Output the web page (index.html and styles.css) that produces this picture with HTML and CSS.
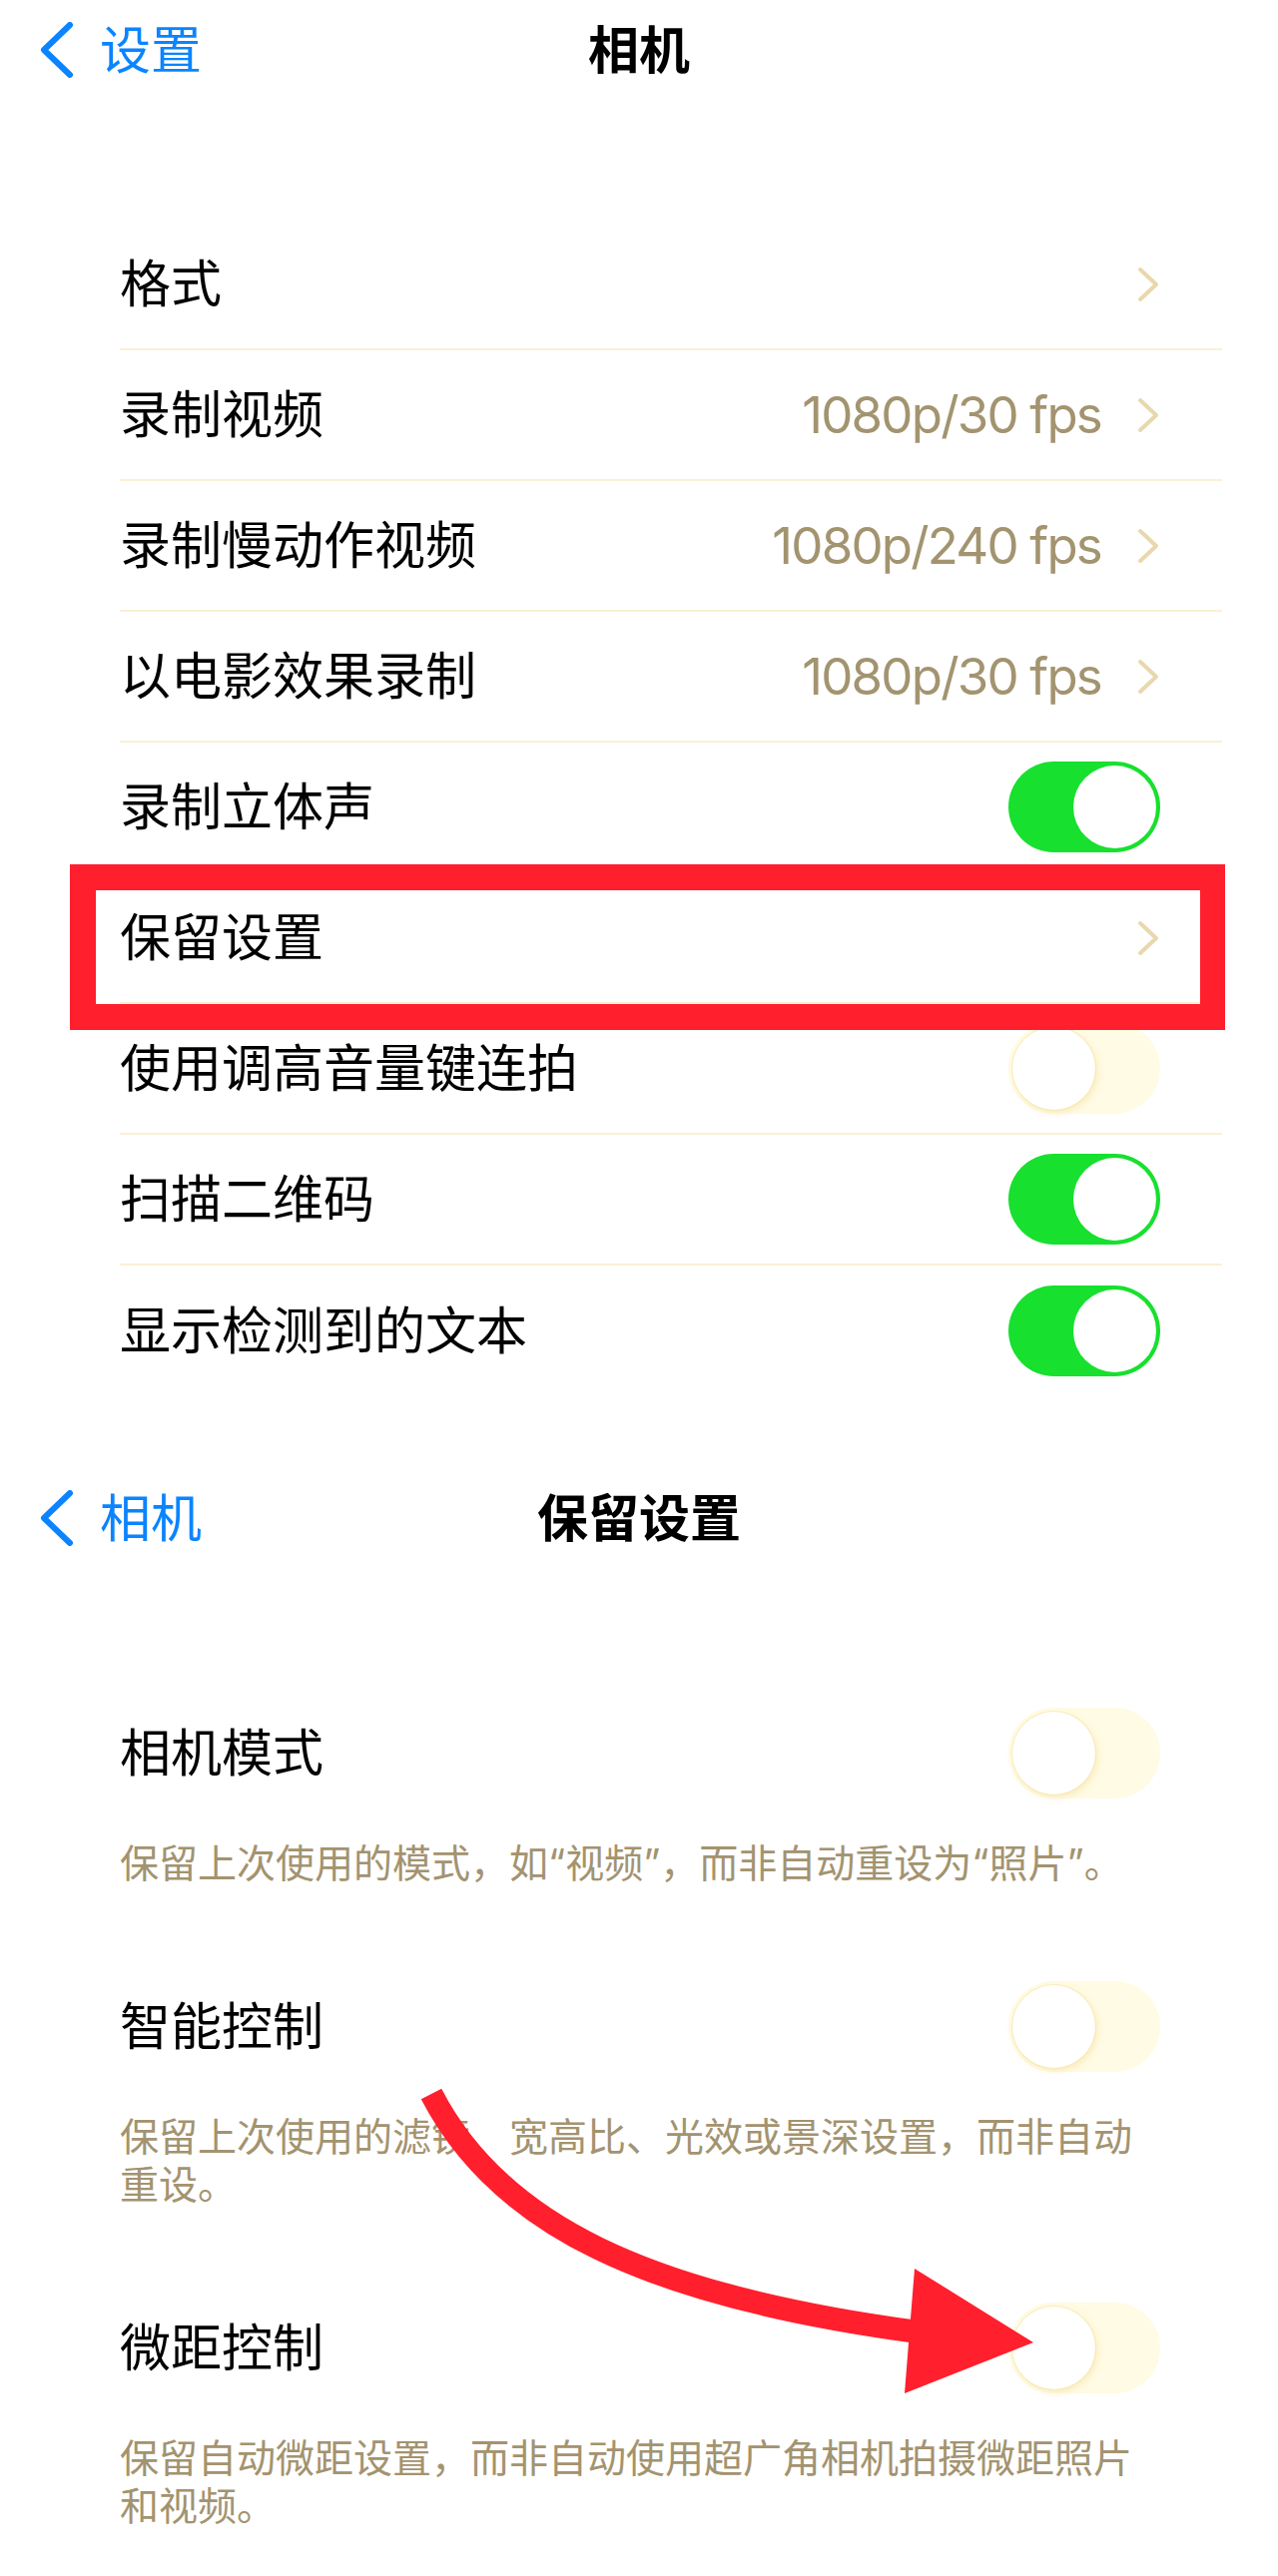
FILE: index.html
```html
<!DOCTYPE html>
<html>
<head>
<meta charset="utf-8">
<title>相机 · 保留设置</title>
<link rel="stylesheet" href="styles.css">
</head>
<body>
<div class="page">
  <section class="screen">
    <header class="nav">
      <a class="back">
        <svg class="back-chevron" viewBox="0 0 34 56"><path d="M30 3 L4 28 L30 53" /></svg>
        <span>设置</span>
      </a>
      <h1 class="nav-title">相机</h1>
      <span></span>
    </header>
    <ul class="list">
      <li class="row"><div class="row-inner"><span class="label">格式</span><span class="accessory"><svg class="chevron" viewBox="0 0 24 36"><path d="M4 3 L20 18 L4 33" /></svg></span></div></li>
      <li class="row"><div class="row-inner"><span class="label">录制视频</span><span class="accessory"><span class="value">1080p/30 fps</span><svg class="chevron" viewBox="0 0 24 36"><path d="M4 3 L20 18 L4 33" /></svg></span></div></li>
      <li class="row"><div class="row-inner"><span class="label">录制慢动作视频</span><span class="accessory"><span class="value">1080p/240 fps</span><svg class="chevron" viewBox="0 0 24 36"><path d="M4 3 L20 18 L4 33" /></svg></span></div></li>
      <li class="row"><div class="row-inner"><span class="label">以电影效果录制</span><span class="accessory"><span class="value">1080p/30 fps</span><svg class="chevron" viewBox="0 0 24 36"><path d="M4 3 L20 18 L4 33" /></svg></span></div></li>
      <li class="row"><div class="row-inner"><span class="label">录制立体声</span><span class="toggle on"><span class="knob"></span></span></div></li>
      <li class="row"><div class="row-inner"><span class="label">保留设置</span><span class="accessory"><svg class="chevron" viewBox="0 0 24 36"><path d="M4 3 L20 18 L4 33" /></svg></span></div></li>
      <li class="row"><div class="row-inner"><span class="label">使用调高音量键连拍</span><span class="toggle off"><span class="knob"></span></span></div></li>
      <li class="row"><div class="row-inner"><span class="label">扫描二维码</span><span class="toggle on"><span class="knob"></span></span></div></li>
      <li class="row"><div class="row-inner"><span class="label">显示检测到的文本</span><span class="toggle on"><span class="knob"></span></span></div></li>
    </ul>
  </section>

  <section class="screen screen-second">
    <header class="nav">
      <a class="back">
        <svg class="back-chevron" viewBox="0 0 34 56"><path d="M30 3 L4 28 L30 53" /></svg>
        <span>相机</span>
      </a>
      <h1 class="nav-title">保留设置</h1>
      <span></span>
    </header>
    <div class="group">
      <div class="row"><div class="row-inner"><span class="label">相机模式</span><span class="toggle off"><span class="knob"></span></span></div></div>
      <p class="footer">保留上次使用的模式，如“视频”，而非自动重设为“照片”。</p>
    </div>
    <div class="group">
      <div class="row"><div class="row-inner"><span class="label">智能控制</span><span class="toggle off"><span class="knob"></span></span></div></div>
      <p class="footer">保留上次使用的滤镜、宽高比、光效或景深设置，而非自动重设。</p>
    </div>
    <div class="group">
      <div class="row"><div class="row-inner"><span class="label">微距控制</span><span class="toggle off"><span class="knob"></span></span></div></div>
      <p class="footer">保留自动微距设置，而非自动使用超广角相机拍摄微距照片和视频。</p>
    </div>
  </section>

  <div class="highlight-box"></div>
  <svg class="annotation-arrow" viewBox="0 0 1280 2581">
    <path d="M432 2098 C500 2230 650 2300 916 2336" />
    <polygon points="916,2273 1035,2347 906,2398" />
  </svg>
</div>
</body>
</html>
```

FILE: styles.css
```css
html, body {
  margin: 0;
  padding: 0;
  background: #ffffff;
}

body {
  font-family: Inter, "Noto Sans CJK SC", sans-serif;
  color: #000;
}

.page {
  position: relative;
  width: 1280px;
  height: 2581px;
  overflow: hidden;
}

/* Navigation bar */
.nav {
  height: 100px;
  display: grid;
  grid-template-columns: 1fr auto 1fr;
  align-items: center;
}

.back {
  display: flex;
  align-items: center;
  gap: 26px;
  padding-left: 40px;
  color: #0a84ff;
  font-size: 51px;
  line-height: 1;
  text-decoration: none;
}

.back-chevron {
  width: 34px;
  height: 56px;
  flex: none;
}

.back-chevron path {
  fill: none;
  stroke: #0a84ff;
  stroke-width: 6;
  stroke-linecap: round;
  stroke-linejoin: round;
}

.nav-title {
  margin: 0;
  font-size: 51px;
  line-height: 1;
  font-weight: 700;
  color: #000;
}

/* Lists */
.list {
  list-style: none;
  margin: 120px 56px 0 60px;
  padding: 0;
}

.row {
  padding-left: 60px;
}

.row-inner {
  height: 131px;
  box-sizing: border-box;
  display: flex;
  align-items: center;
  justify-content: space-between;
  padding-right: 62px;
  border-bottom: 2px solid #fbf0d3;
}

.list .row:last-child .row-inner,
.group .row-inner {
  border-bottom: none;
}

.label {
  font-size: 51px;
  line-height: 1.2;
  color: #000;
}

.accessory {
  display: flex;
  align-items: center;
  gap: 35px;
}

.value {
  font-size: 51px;
  line-height: 1.2;
  color: #a39470;
  letter-spacing: -1.8px;
}

.chevron {
  width: 24px;
  height: 36px;
  flex: none;
}

.chevron path {
  fill: none;
  stroke: #e8d8ad;
  stroke-width: 4;
  stroke-linecap: round;
  stroke-linejoin: round;
}

/* Toggles */
.toggle {
  width: 152px;
  height: 91px;
  box-sizing: border-box;
  border-radius: 46px;
  padding: 4px;
  display: flex;
  flex: none;
}

.toggle.on {
  background: #17e02e;
  justify-content: flex-end;
}

.toggle.off {
  background: #fffbe4;
  justify-content: flex-start;
}

.knob {
  width: 83px;
  height: 83px;
  border-radius: 50%;
  background: #ffffff;
}

.toggle.off .knob {
  box-shadow: 0 0 0 1px rgba(246, 226, 160, 0.55), 2px 3px 7px rgba(235, 205, 110, 0.35);
}

/* Second screen */
.screen-second {
  margin-top: 72px;
}

.group {
  margin: 0 56px 0 60px;
}

.screen-second .nav + .group {
  margin-top: 120px;
}

.group + .group {
  margin-top: 74px;
}

.footer {
  margin: 0;
  padding: 21px 60px 0 60px;
  font-size: 39px;
  line-height: 48px;
  color: #a3936f;
}

/* Annotations */
.highlight-box {
  position: absolute;
  left: 70px;
  top: 866px;
  width: 1157px;
  height: 166px;
  box-sizing: border-box;
  border-style: solid;
  border-color: #ff1f2d;
  border-width: 26px 25px 26px 26px;
}

.annotation-arrow {
  position: absolute;
  left: 0;
  top: 0;
  width: 1280px;
  height: 2581px;
  pointer-events: none;
}

.annotation-arrow path {
  fill: none;
  stroke: #ff1f2d;
  stroke-width: 23;
}

.annotation-arrow polygon {
  fill: #ff1f2d;
}
```
